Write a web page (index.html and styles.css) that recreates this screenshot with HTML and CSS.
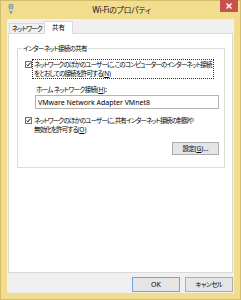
FILE: index.html
```html
<!DOCTYPE html>
<html lang="ja">
<head>
<meta charset="utf-8">
<link rel="stylesheet" href="styles.css">
</head>
<body>
<div class="window">
  <div class="titlebar">
    <svg class="appicon" width="6" height="10" viewBox="0 0 6 10">
      <rect x="1" y="0.5" width="4" height="4" rx="0.5" fill="#9fb6cc" stroke="#6f8499" stroke-width="0.6"/>
      <rect x="1.5" y="4.5" width="3" height="3" fill="#d8e2ea" stroke="#7d8e9e" stroke-width="0.5"/>
      <rect x="2.2" y="7.5" width="1.6" height="2" fill="#5f7488"/>
    </svg>
    <div class="title">Wi-Fiのプロパティ</div>
    <div class="close">
      <svg width="18" height="12" viewBox="0 0 18 12">
        <path d="M7 4 L11 8 M11 4 L7 8" stroke="#fff" stroke-width="1.4" stroke-linecap="square"/>
      </svg>
    </div>
  </div>
  <div class="client">
    <div class="tabs">
      <div class="tab">ネットワーク</div>
      <div class="tab active">共有</div>
    </div>
    <div class="panel">
      <fieldset class="group">
        <legend>インターネット接続の共有</legend>
        <div class="check-row">
          <span class="cb"><svg width="5" height="5" viewBox="0 0 5 5"><path d="M0.6 2.6 L1.9 3.9 L4.4 0.8" fill="none" stroke="#000" stroke-width="1"/></svg></span>
          <span class="cb-label focus">ネットワークのほかのユーザーに、このコンピューターのインターネット接続<br>をとおしての接続を許可する<span class="lat">(<u>N</u>)</span></span>
        </div>
        <div class="home-label">ホーム ネットワーク接続<span class="lat">(<u>H</u>):</span></div>
        <div class="textbox">VMware Network Adapter VMnet8</div>
        <div class="check-row second">
          <span class="cb"><svg width="5" height="5" viewBox="0 0 5 5"><path d="M0.6 2.6 L1.9 3.9 L4.4 0.8" fill="none" stroke="#000" stroke-width="1"/></svg></span>
          <span class="cb-label">ネットワークのほかのユーザーに、共有インターネット接続の制御や<br>無効化を許可する<span class="lat">(<u>O</u>)</span></span>
        </div>
        <div class="btn-row">
          <div class="btn">設定<span class="lat">(<u>G</u>)...</span></div>
        </div>
      </fieldset>
    </div>
    <div class="footer">
      <div class="btn big default latin">OK</div>
      <div class="btn big">キャンセル</div>
    </div>
  </div>
</div>
</body>
</html>
```
FILE: styles.css
```css
* { box-sizing: border-box; }
html, body { margin: 0; padding: 0; }
body {
  width: 241px;
  height: 300px;
  overflow: hidden;
  font-family: "Noto Sans", "Noto Sans CJK JP", sans-serif;
  font-size: 6.5px;
  letter-spacing: -0.85px;
  line-height: 9px;
  color: #000;
  font-feature-settings: "palt";
}
.lat { letter-spacing: 0; font-size: 6.5px; }
.window {
  width: 241px;
  height: 300px;
  background: #f1dd8d;
  border: 1px solid #d3bc6c;
  padding: 0 6px 6px 6px;
  display: flex;
  flex-direction: column;
}
.titlebar {
  height: 18px;
  margin: 0 -6px;
  padding: 0 2px 0 7px;
  display: grid;
  grid-template-columns: 1fr auto 1fr;
  align-items: center;
}
.appicon { justify-self: start; margin-top: -3px; }
.title {
  font-size: 8px;
  letter-spacing: -0.3px;
  color: #222;
  margin-right: 3px;
  margin-top: -1px;
}
.close {
  justify-self: end;
  align-self: start;
  margin-top: -1px;
  width: 18px;
  height: 12px;
  background: #c7514c;
}
.close svg { display: block; }
.client {
  flex: 1;
  background: #f0f0f0;
  padding: 2px 1px 0 1px;
  display: flex;
  flex-direction: column;
}
.tabs {
  display: flex;
  align-items: flex-end;
  height: 13px;
  margin-left: 1px;
  margin-bottom: -1px;
  position: relative;
  z-index: 1;
}
.tab {
  height: 10px;
  margin-bottom: 1px;
  width: 36px;
  border: 1px solid #d9d9d9;
  border-bottom: none;
  background: #f0f0f0;
  text-align: center;
  line-height: 9px;
  white-space: nowrap;
  letter-spacing: -0.7px;
}
.tab.active {
  height: 13px;
  margin-bottom: 0;
  width: 29px;
  margin-left: -1px;
  background: #fff;
  padding-top: 1px;
  letter-spacing: 0;
}
.panel {
  height: 240px;
  background: #fff;
  border: 1px solid #d9d9d9;
}
.group {
  margin: 10px 7px 0 8px;
  padding: 6px 5px 12px 7px;
  border: 1px solid #dcdcdc;
  min-width: 0;
}
.group legend {
  padding: 0 1px;
  margin-left: -3px;
  line-height: 9px;
  letter-spacing: -0.7px;
}
.check-row {
  display: flex;
  align-items: flex-start;
}
.check-row.second { margin-top: 6px; }
.cb {
  flex: none;
  width: 7px;
  height: 7px;
  margin-top: 2px;
  border: 1px solid #707070;
  background: #fff;
  display: flex;
  align-items: center;
  justify-content: center;
}
.cb svg { display: block; }
.cb-label {
  border: 1px dotted transparent;
  padding: 0 1px;
  white-space: nowrap;
}
.cb-label.focus { border-color: #333; }
.home-label {
  margin: 6px 0 0 11px;
  letter-spacing: -0.6px;
}
.textbox {
  margin: 1px 0 0 10px;
  width: 184px;
  height: 14px;
  border: 1px solid #b4b4b4;
  padding: 2px 2px 0 2px;
  font-size: 7px;
  letter-spacing: 0;
  line-height: 9px;
  white-space: nowrap;
}
.btn-row {
  display: flex;
  justify-content: flex-end;
  margin-top: 7px;
}
.btn {
  width: 47px;
  height: 13px;
  background: #e5e5e5;
  border: 1px solid #adadad;
  display: flex;
  align-items: center;
  justify-content: center;
  line-height: 9px;
  white-space: nowrap;
  letter-spacing: -0.5px;
}
.footer {
  display: flex;
  justify-content: flex-end;
  gap: 5px;
  margin-top: 4px;
}
.btn.big {
  width: 48px;
  height: 15px;
}
.btn.latin { font-size: 7px; letter-spacing: 0; }
.btn.default { border-color: #6aa6e8; }
```
